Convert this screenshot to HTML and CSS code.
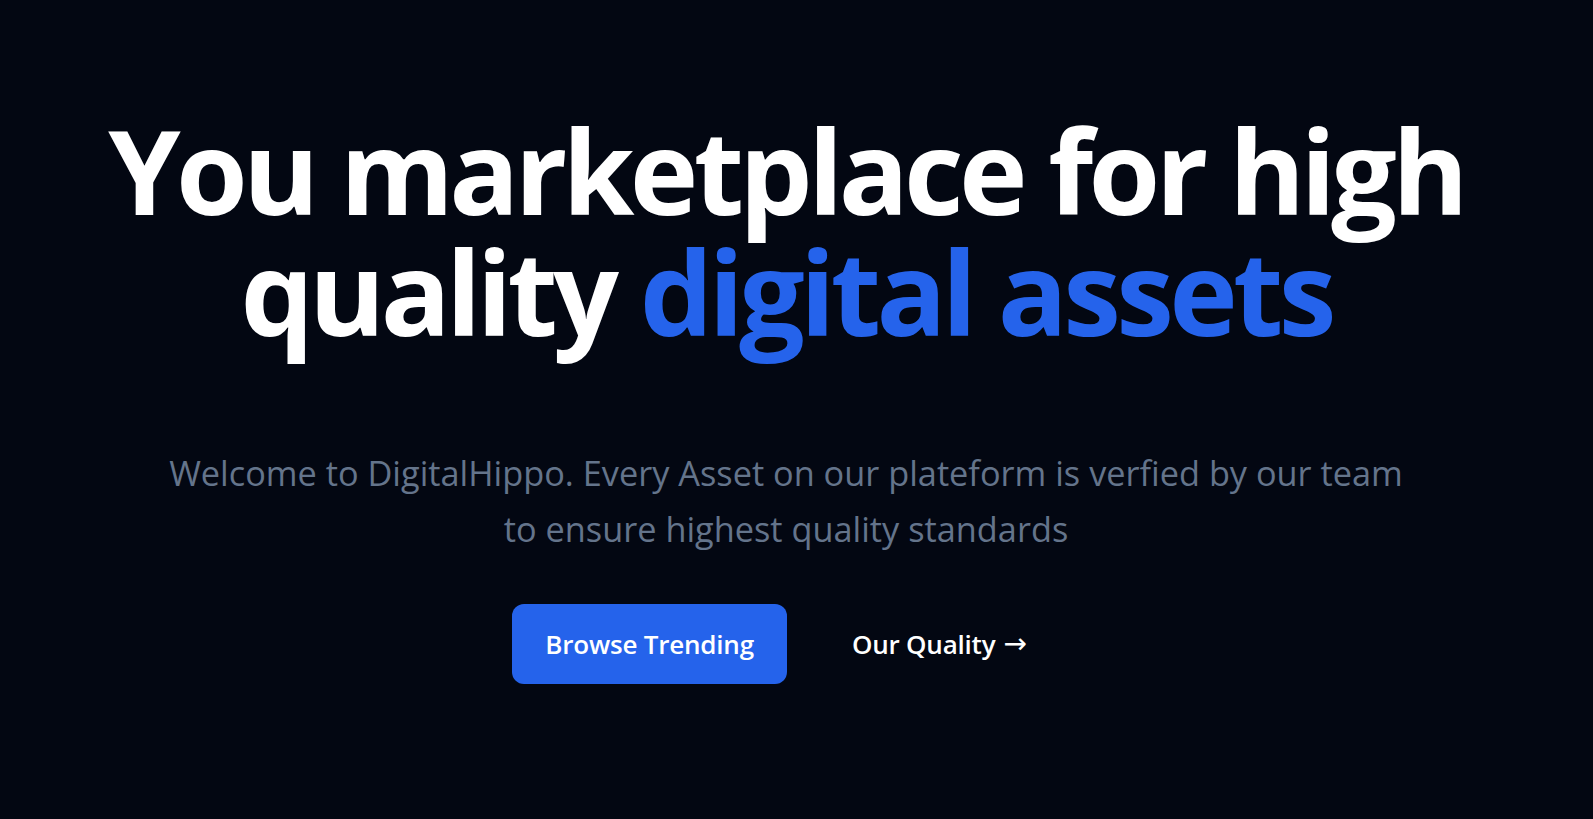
FILE: index.html
```html
<!DOCTYPE html>
<html lang="en">
<head>
<meta charset="utf-8">
<title>DigitalHippo</title>
<link rel="stylesheet" href="styles.css">
</head>
<body>
<main class="hero">
  <h1 class="title">You marketplace for high quality <span class="accent">digital assets</span></h1>
  <p class="lead">Welcome to DigitalHippo. Every Asset on our plateform is verfied by our team to ensure highest quality standards</p>
  <div class="actions">
    <a class="btn btn-primary" href="#">Browse Trending</a>
    <a class="btn btn-ghost" href="#">Our Quality <span class="arrow">&rarr;</span></a>
  </div>
</main>
</body>
</html>
```
FILE: styles.css
```css
html, body {
  margin: 0;
  height: 100%;
  background: #030712;
}
body {
  font-family: "Open Sans", "Noto Sans", sans-serif;
  color: #ffffff;
}
.hero {
  display: flex;
  flex-direction: column;
  align-items: center;
  text-align: center;
  padding: 110px 21px 0 0;
}
.title {
  margin: 0;
  max-width: 1420px;
  font-size: 116px;
  line-height: 121px;
  font-weight: 700;
  letter-spacing: -4.7px;
  color: #ffffff;
}
.accent {
  color: #2563eb;
}
.lead {
  margin: 93px 0 0;
  max-width: 1260px;
  font-size: 34.3px;
  line-height: 56px;
  font-weight: 400;
  color: #64748b;
}
.actions {
  margin-top: 47px;
  display: flex;
  gap: 32px;
  align-items: center;
}
.btn {
  display: inline-flex;
  align-items: center;
  justify-content: center;
  gap: 8px;
  height: 80px;
  padding: 0 33px;
  border-radius: 12px;
  font-size: 26px;
  font-weight: 600;
  letter-spacing: -0.2px;
  text-decoration: none;
  color: #ffffff;
}
.btn-primary {
  background: #2563eb;
}
.btn-ghost {
  background: transparent;
}
.arrow {
  font-family: "DejaVu Sans", sans-serif;
  font-size: 28px;
  line-height: 1;
  font-weight: 400;
}
```
